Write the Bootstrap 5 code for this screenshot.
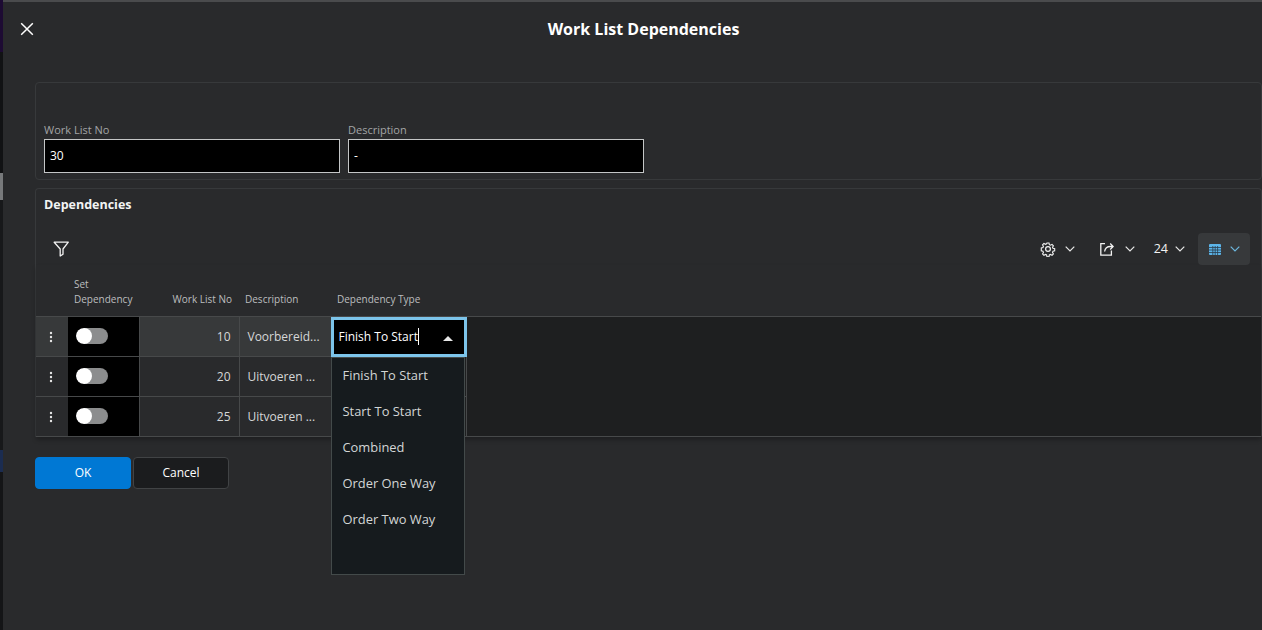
<!doctype html>
<html lang="en">
<head>
<meta charset="utf-8">
<title>Work List Dependencies</title>
<link href="https://cdn.jsdelivr.net/npm/bootstrap@5.3.0/dist/css/bootstrap.min.css" rel="stylesheet">
<style>
html,body{height:630px;overflow:hidden}
body{background:#292a2c;font-family:"Open Sans","Liberation Sans",sans-serif;color:#e8e8e8;font-size:13px}
.bgstrip{width:3px;flex:none;background:#0d0e10;display:flex;flex-direction:column}
.bgstrip i{display:block}
.s1{height:52px;background:#1d0b33}.s2{height:121px;background:#111214}.s4{height:27px;background:#77797b}
.s5{height:250px;background:#17181a}.s6{height:22px;background:#1b2c50}.s7{height:158px;background:#141517}
.mainpane{flex:1;min-width:0;border-top:2px solid #4a4b4d;height:630px;position:relative}
.titlebar{height:54px}
.closebtn{position:absolute;left:16px;top:19px;width:16px;height:16px;padding:0;border:0;background:none;line-height:0}
.dlgtitle{font-size:16px;font-weight:700;color:#fff;margin:0;padding-left:22px;line-height:22px}
.contentpane{padding:26px 0 0 32px}
.grp{border:1px solid #37393b;border-radius:4px}
.grp1{height:98px;padding:39px 8px 0;margin-bottom:8px;display:flex;gap:8px}
.fldlabel{font-size:11px;line-height:15px;color:#a3a5a6;display:block;margin:0 0 2px}
.fld{width:296px}
.fldinput.form-control{background:#000;border:1px solid #c4c6c7;border-radius:0;color:#fff;height:34px;padding:0 5px 2px;font-size:12px;box-shadow:none}
.grp2{height:249px;border-bottom:0;border-radius:4px 4px 0 0;position:relative}
.grptitle{font-size:12.5px;font-weight:700;color:#f2f4f4;padding:7px 8px 0;line-height:17px;margin:0}
.tools{height:32px;margin:20px 11px 0 17px;display:flex;align-items:center}
.toolbtn{display:flex;align-items:center;color:#f2f2f2;font-size:12.5px;height:32px;padding:0}
.gapgear{gap:9px;margin-right:25px}
.gapshare{gap:11px;margin-right:19px}
.gapnum{gap:7px;margin-right:13px}
.viewbtn{background:#37393b;border-radius:4px;width:52px;justify-content:center;gap:9px}
.chev{width:10px;height:6px;display:block}
.hdr th{font-size:10px;font-weight:400;color:#bcbebf;background:transparent;border:0;padding:0 0 9px 6px;line-height:15px;vertical-align:bottom;height:51px;box-shadow:none}
.deptable{table-layout:fixed;width:100%;margin:0;--bs-table-bg:transparent;--bs-table-color:#d8d9da;border-collapse:collapse;box-shadow:0 3px 4px rgba(0,0,0,.25)}
.deptable td{height:40px;padding:2px 8px 0;border:0;border-bottom:1px solid #47494a;border-right:1px solid #47494a;vertical-align:middle;font-size:12px;background:transparent;color:#d6d7d8;box-shadow:none}
.hdr{border-bottom:1px solid #47494a}
.deptable td.cellkebab{padding:0 2px 0 0;text-align:center;border-right:0}
.deptable td.celltoggle{background:#000;padding:0 8px}
.deptable td.cellno{text-align:right}
.deptable td.cellrest{background:#1e1f20;padding:0}
.deptable td.cellfill{background:#1e1f20;border-right:0;padding:0}
.deptable tr.currow td:not(.celltoggle):not(.cellfill):not(.celledit){background:#37393a}
.deptable td.celledit{padding:0;border-right:0;border-bottom:0;background:#1e1f20;position:relative;overflow:visible}
.switchwrap.form-switch{padding:0;margin:0;min-height:0;line-height:0}
.switchwrap .form-check-input{width:32px;height:16px;margin:0;float:none;background-color:#8c8d8e;border:0;border-radius:8px;--bs-form-switch-bg:url("data:image/svg+xml,%3csvg xmlns='http://www.w3.org/2000/svg' viewBox='-4 -4 8 8'%3e%3ccircle r='4' fill='%23fff'/%3e%3c/svg%3e");background-position:left center;background-size:16px 16px;box-shadow:none}
.editbox{position:absolute;left:-1px;top:0;width:136px;height:40px;border:3px solid #7cc4ea;background:#000;color:#fff;font-size:12px;display:flex;align-items:center;padding-left:5px;z-index:3}
.caretbar{display:inline-block;width:1px;height:17px;background:#fff}
.uptri{position:absolute;right:11px;top:16px;width:0;height:0;border-left:5px solid transparent;border-right:5px solid transparent;border-bottom:5px solid #e8e8e8}
.typemenu.dropdown-menu{display:block;position:absolute;left:-1px;top:40px;width:134px;height:218px;background:#161b1e;border:1px solid #434a4a;border-radius:0;padding:0;margin:0;z-index:4;min-width:0}
.typemenu .dropdown-item{height:36px;display:flex;align-items:center;padding:0 11px;font-size:12.9px;color:#d3d6d6;background:transparent}
.okbar{margin-top:20px;display:flex;gap:2px}
.btnact.btn{width:96px;height:32px;padding:0;font-size:12px;border-radius:4px;color:#fff}
.btnok.btn{background:#0078d4;border:1px solid #0078d4}
.btncancel.btn{background:#1b1c1e;border:1px solid #414345}
</style>
</head>
<body class="d-flex">
<div class="bgstrip"><i class="s1"></i><i class="s2"></i><i class="s4"></i><i class="s5"></i><i class="s6"></i><i class="s7"></i></div>
<div class="mainpane">
  <div class="titlebar d-flex align-items-center justify-content-center">
    <button class="closebtn" type="button" aria-label="Close">
      <svg width="16" height="16" viewBox="0 0 16 16"><path d="M2.2 2.2 13.8 13.8M13.8 2.2 2.2 13.8" stroke="#fff" stroke-width="1.5" fill="none"/></svg>
    </button>
    <h1 class="dlgtitle">Work List Dependencies</h1>
  </div>
  <div class="contentpane">
    <div class="grp grp1">
      <div class="fld"><label class="fldlabel">Work List No</label><input class="form-control fldinput" value="30"></div>
      <div class="fld"><label class="fldlabel">Description</label><input class="form-control fldinput" value="-"></div>
    </div>
    <div class="grp grp2">
      <h2 class="grptitle">Dependencies</h2>
      <div class="tools">
        <svg width="17" height="16" viewBox="0 0 17 16"><path d="M1.2 1.2H15.3L10 8V13.2L7.2 15V8Z" fill="none" stroke="#f2f2f2" stroke-width="1.3" stroke-linejoin="round"/></svg>
        <div class="ms-auto d-flex align-items-center">
          <div class="toolbtn gapgear">
            <svg width="16" height="16" viewBox="0 0 16 16" fill="none" stroke="#f2f2f2"><circle cx="8" cy="8" r="2.4" stroke-width="1.2"/><path d="M6.8 1h2.4l.4 2 1.3.6 1.8-1 1.6 1.7-1 1.7.5 1.3 2 .5v2.4l-2 .5-.5 1.3 1 1.7-1.6 1.7-1.8-1-1.3.6-.4 2H6.8l-.4-2-1.3-.6-1.8 1-1.6-1.7 1-1.7-.5-1.3-2-.5V6.8l2-.5.5-1.3-1-1.7 1.6-1.7 1.8 1 1.3-.6z" transform="translate(1.1 1.1) scale(.86)" stroke-width="1.3"/></svg>
            <svg class="chev" viewBox="0 0 10 6"><path d="M.7.7 5 5 9.3.7" fill="none" stroke="#e8e8e8" stroke-width="1.2"/></svg>
          </div>
          <div class="toolbtn gapshare">
            <svg width="14" height="14" viewBox="0 0 14 14" fill="none" stroke="#f2f2f2" stroke-width="1.3"><path d="M5 1.6H.8V13.2H11.4V8.5"/><path d="M4.6 9.5C5 6.4 7.4 4.5 10.5 4.5H13M10.2 1.5 13.2 4.5 10.2 7.5"/></svg>
            <svg class="chev" viewBox="0 0 10 6"><path d="M.7.7 5 5 9.3.7" fill="none" stroke="#e8e8e8" stroke-width="1.2"/></svg>
          </div>
          <div class="toolbtn gapnum">24
            <svg class="chev" viewBox="0 0 10 6"><path d="M.7.7 5 5 9.3.7" fill="none" stroke="#e8e8e8" stroke-width="1.2"/></svg>
          </div>
          <div class="toolbtn viewbtn">
            <svg width="12" height="11" viewBox="0 0 12 11"><rect width="12" height="11" rx="1" fill="#5cb4e8"/><path d="M0 3.5H12M0 6H12M0 8.5H12M3.8 2V11M6.2 2V11M8.6 2V11" stroke="#2b3d4c" stroke-width=".8"/></svg>
            <svg class="chev" viewBox="0 0 10 6"><path d="M.7.7 5 5 9.3.7" fill="none" stroke="#6cb6dd" stroke-width="1.2"/></svg>
          </div>
        </div>
      </div>
      <table class="table deptable">
        <colgroup><col style="width:32px"><col style="width:71px"><col style="width:100px"><col style="width:92px"><col style="width:135px"><col></colgroup>
        <thead>
          <tr class="hdr">
            <th></th>
            <th>Set<br>Dependency</th>
            <th class="text-end" style="padding-right:7px">Work List No</th>
            <th>Description</th>
            <th>Dependency Type</th>
            <th></th>
          </tr>
        </thead>
        <tbody>
          <tr class="currow">
            <td class="cellkebab"><svg width="4" height="12" viewBox="0 0 4 12" fill="#e6e6e6"><circle cx="2" cy="2" r="1.2"/><circle cx="2" cy="6" r="1.2"/><circle cx="2" cy="10" r="1.2"/></svg></td>
            <td class="celltoggle"><div class="form-check form-switch switchwrap"><input class="form-check-input" type="checkbox" role="switch" aria-label="Set dependency"></div></td>
            <td class="cellno">10</td>
            <td class="text-truncate">Voorbereid...</td>
            <td class="celledit">
              <div class="editbox">Finish To Start<span class="caretbar"></span><span class="uptri"></span></div>
              <div class="dropdown-menu typemenu">
                <a class="dropdown-item" href="#">Finish To Start</a>
                <a class="dropdown-item" href="#">Start To Start</a>
                <a class="dropdown-item" href="#">Combined</a>
                <a class="dropdown-item" href="#">Order One Way</a>
                <a class="dropdown-item" href="#">Order Two Way</a>
              </div>
            </td>
            <td class="cellfill" rowspan="3"></td>
          </tr>
          <tr>
            <td class="cellkebab"><svg width="4" height="12" viewBox="0 0 4 12" fill="#e6e6e6"><circle cx="2" cy="2" r="1.2"/><circle cx="2" cy="6" r="1.2"/><circle cx="2" cy="10" r="1.2"/></svg></td>
            <td class="celltoggle"><div class="form-check form-switch switchwrap"><input class="form-check-input" type="checkbox" role="switch" aria-label="Set dependency"></div></td>
            <td class="cellno">20</td>
            <td class="text-truncate">Uitvoeren ...</td>
            <td class="cellrest"></td>
          </tr>
          <tr>
            <td class="cellkebab"><svg width="4" height="12" viewBox="0 0 4 12" fill="#e6e6e6"><circle cx="2" cy="2" r="1.2"/><circle cx="2" cy="6" r="1.2"/><circle cx="2" cy="10" r="1.2"/></svg></td>
            <td class="celltoggle"><div class="form-check form-switch switchwrap"><input class="form-check-input" type="checkbox" role="switch" aria-label="Set dependency"></div></td>
            <td class="cellno">25</td>
            <td class="text-truncate">Uitvoeren ...</td>
            <td class="cellrest"></td>
          </tr>
        </tbody>
      </table>
    </div>
    <div class="okbar">
      <button class="btn btnact btnok" type="button">OK</button>
      <button class="btn btnact btncancel" type="button">Cancel</button>
    </div>
  </div>
</div>
</body>
</html>
